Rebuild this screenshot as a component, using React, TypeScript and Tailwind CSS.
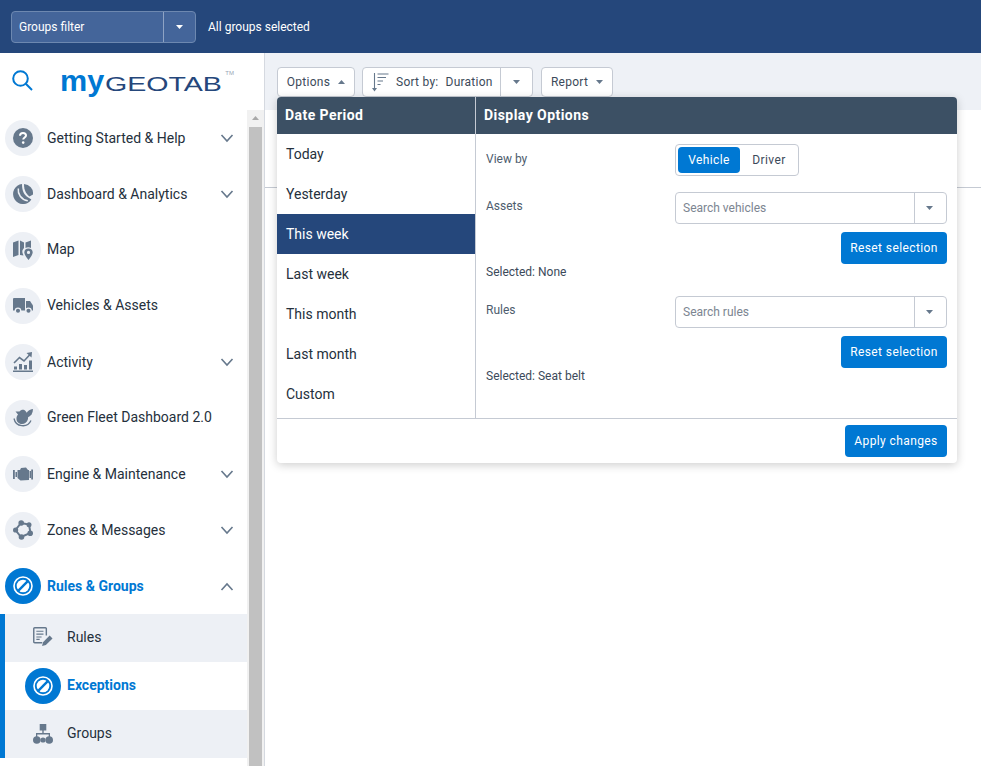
import React from "react";

const IC = "#66788c";

function Chevron({ up = false }: { up?: boolean }) {
  return (
    <svg width="14" height="9" viewBox="0 0 14 9" fill="none" stroke={IC} strokeWidth="1.6">
      <path d={up ? "M1.5 8 L7 2 L12.5 8" : "M1.5 1 L7 7 L12.5 1"} />
    </svg>
  );
}

function Caret({ up = false, color = "#66788c" }: { up?: boolean; color?: string }) {
  return (
    <svg width="7" height="4" viewBox="0 0 7 4" fill={color}>
      <path d={up ? "M0 4 L3.5 0 L7 4Z" : "M0 0 L7 0 L3.5 4Z"} />
    </svg>
  );
}

function HelpIcon() {
  return (
    <svg width="20" height="20" viewBox="0 0 20 20">
      <circle cx="10" cy="10" r="10" fill={IC} />
      <path d="M7 7.8 C7 5.8 8.3 5 10 5 C11.8 5 13 6 13 7.5 C13 9.4 10.2 9.6 10.2 11.6" fill="none" stroke="#fff" strokeWidth="2" />
      <circle cx="10.2" cy="14.6" r="1.3" fill="#fff" />
    </svg>
  );
}

function DashIcon() {
  return (
    <svg width="20" height="20" viewBox="0 0 20 20" fill={IC}>
      <path d="M11 0 A9.5 9.5 0 0 1 20 10.5 L16.5 12.5 C13 10 11 6 11 0Z" />
      <path d="M9 0.1 A10 10 0 1 0 18.4 15.6 L14.8 13.2 C11 11 9 6.5 9 0.1Z" />
      <path d="M5.3 4.5 C4.6 10 8 15.5 14.8 16.8" fill="none" stroke="#edf0f5" strokeWidth="1.5" />
    </svg>
  );
}

function MapIcon() {
  return (
    <svg width="20" height="20" viewBox="0 0 20 20" fill={IC}>
      <path d="M0 2.5 L5.5 0.5 L5.5 15 L0 17Z" />
      <path d="M7 0.5 L11 2.5 L11 8 C9.5 9.5 9 11 9.5 13 L10.5 15.5 L7 15Z" />
      <path d="M12.5 2.5 L18 0.5 L18 8 C16.5 7 14 7 12.5 8Z" />
      <path fillRule="evenodd" d="M15.5 8.5 C18 8.5 19.7 10.2 19.7 12.3 C19.7 14.5 17.5 17.5 15.5 20 C13.5 17.5 11.3 14.5 11.3 12.3 C11.3 10.2 13 8.5 15.5 8.5Z M15.5 10.8 A1.6 1.6 0 1 0 15.5 14 A1.6 1.6 0 1 0 15.5 10.8Z" />
    </svg>
  );
}

function TruckIcon() {
  return (
    <svg width="20" height="16" viewBox="0 0 20 16" fill={IC}>
      <path d="M0 1 A1 1 0 0 1 1 0 L12 0 L12 12.5 L0 12.5Z" />
      <path d="M13 3 L17 3 L20 7.5 L20 12.5 L13 12.5Z" />
      <circle cx="5" cy="12.8" r="2.7" stroke="#edf0f5" strokeWidth="1.3" />
      <circle cx="15.5" cy="12.8" r="2.7" stroke="#edf0f5" strokeWidth="1.3" />
    </svg>
  );
}

function ActivityIcon() {
  return (
    <svg width="20" height="20" viewBox="0 0 20 20" fill={IC}>
      <rect x="0" y="18.5" width="20" height="1.5" />
      <rect x="1" y="14.5" width="3" height="3" />
      <rect x="6" y="12" width="3" height="5.5" />
      <rect x="11" y="13" width="3" height="4.5" />
      <rect x="16" y="8.5" width="3" height="9" />
      <path d="M1 11 L6.5 5.5 L11 9 L17 2.5" fill="none" stroke={IC} strokeWidth="1.6" />
      <path d="M13.5 1 L19 0 L18.5 5.5Z" />
    </svg>
  );
}

function GreenIcon() {
  return (
    <svg width="20" height="20" viewBox="0 0 20 20" fill={IC}>
      <path d="M2.5 3.5 L6.5 3.5 C8 1.5 11 1 12.5 3 C14.5 5 15.5 8 15 11 C14.2 14.5 11.5 16 9 16 C5.5 16 3.2 13.5 3.5 10 C3.6 8.5 4.3 7.3 5 6.5Z" />
      <path d="M13 7.5 C13.5 3.5 16 1.5 20 1 C20 5 18 8 15 9.3Z" />
      <path d="M1 10.5 A9 9 0 0 0 18 12.5" fill="none" stroke={IC} strokeWidth="1.3" />
    </svg>
  );
}

function EngineIcon() {
  return (
    <svg width="20" height="14" viewBox="0 0 20 14" fill={IC}>
      <rect x="0" y="3" width="1.8" height="9" />
      <rect x="2.5" y="5" width="1.5" height="5" />
      <path d="M4.5 3 L7 3 L8 1 L13 0.5 L15 3 L16 3 L16 13 L7.5 13.5 L4.5 11Z" />
      <rect x="16.5" y="4" width="1.5" height="7" />
      <rect x="18.2" y="2.5" width="1.8" height="10" />
    </svg>
  );
}

function ZonesIcon() {
  return (
    <svg width="20" height="20" viewBox="0 0 20 20" fill={IC}>
      <path d="M8 3 L16 4.5 L17.5 13 L8 17 L2.5 10Z" fill="none" stroke={IC} strokeWidth="2" />
      <circle cx="8.2" cy="3" r="2.8" />
      <circle cx="16" cy="4.8" r="2.5" />
      <circle cx="17.2" cy="13.2" r="2.8" />
      <circle cx="8.5" cy="17" r="2.8" />
      <circle cx="2.6" cy="10" r="2.6" />
    </svg>
  );
}

function BanIcon() {
  return (
    <svg width="20" height="20" viewBox="0 0 20 20" fill="none" stroke="#fff">
      <circle cx="10" cy="10" r="9" strokeWidth="1.6" />
      <circle cx="10" cy="10" r="6.3" fill="#fff" stroke="none" />
      <path d="M5.2 14.8 L14.8 5.2" stroke="#0078d3" strokeWidth="2.4" />
    </svg>
  );
}

function RulesIcon() {
  return (
    <svg width="20" height="20" viewBox="0 0 21 21" fill="none" stroke={IC}>
      <path d="M9.5 16.5 L1.8 16.5 A1 1 0 0 1 0.8 15.5 L0.8 1.8 A1 1 0 0 1 1.8 0.8 L13 0.8 A1 1 0 0 1 14 1.8 L14 9" strokeWidth="1.5" />
      <path d="M3.5 4.5 H11 M3.5 7.5 H11 M3.5 10.5 H9 M3.5 13 H7" strokeWidth="1.2" />
      <path d="M9.5 20 L10.5 16 L17.5 9 L20.5 12 L13.5 19Z" fill={IC} stroke="none" />
    </svg>
  );
}

function GroupsIcon() {
  return (
    <svg width="20" height="20" viewBox="0 0 20 20" fill={IC}>
      <path d="M6.7 0 H13.3 V6.5 H6.7Z" />
      <path d="M9.3 6 H10.7 V9 H17 V13 H15.7 V10.4 H4.3 V13 H3 V9 H9.3Z" />
      <circle cx="3.8" cy="16" r="3.8" />
      <circle cx="16.2" cy="16" r="3.8" />
      <circle cx="10" cy="16" r="2.6" />
    </svg>
  );
}

function SortIcon() {
  return (
    <svg width="17" height="19" viewBox="0 0 17 19" fill="none" stroke={IC} strokeWidth="1.1">
      <path d="M2.5 0 V17" />
      <path d="M0 15 H5 L2.5 18.5Z" fill={IC} stroke="none" />
      <path d="M5.5 1 H16.5 M5.5 4.5 H14 M5.5 8 H11 M5.5 11.5 H8.5" />
    </svg>
  );
}

type Item = { label: string; icon: React.ReactNode; chevron: boolean };

const items: Item[] = [
  { label: "Getting Started & Help", icon: <HelpIcon />, chevron: true },
  { label: "Dashboard & Analytics", icon: <DashIcon />, chevron: true },
  { label: "Map", icon: <MapIcon />, chevron: false },
  { label: "Vehicles & Assets", icon: <TruckIcon />, chevron: false },
  { label: "Activity", icon: <ActivityIcon />, chevron: true },
  { label: "Green Fleet Dashboard 2.0", icon: <GreenIcon />, chevron: false },
  { label: "Engine & Maintenance", icon: <EngineIcon />, chevron: true },
  { label: "Zones & Messages", icon: <ZonesIcon />, chevron: true },
];

function NavRow({ item }: { item: Item }) {
  return (
    <div className="h-14 flex items-center pl-[5px] pr-[13px]">
      <div className="w-9 h-9 rounded-full bg-[#edf0f5] flex items-center justify-center shrink-0">{item.icon}</div>
      <span className={`ml-1.5 flex-1 text-sm text-[#25303c] ${item.chevron ? "" : "pb-[2px]"}`}>{item.label}</span>
      {item.chevron && <Chevron />}
    </div>
  );
}

function SearchBox({ placeholder }: { placeholder: string }) {
  return (
    <div className="h-8 w-[272px] rounded border border-[#c5cad3] flex items-center bg-white">
      <span className="flex-1 pl-[7px] text-xs text-[#7c8591]">{placeholder}</span>
      <div className="w-8 h-full border-l border-[#c5cad3] flex items-center justify-center pr-[2px]">
        <Caret />
      </div>
    </div>
  );
}

function PrimaryButton({ children, w }: { children: React.ReactNode; w: string }) {
  return (
    <button className={`h-8 ${w} rounded bg-[#0078d3] text-white text-xs tracking-[0.4px] flex items-center justify-center`}>
      {children}
    </button>
  );
}

const dates = ["Today", "Yesterday", "This week", "Last week", "This month", "Last month", "Custom"];

export default function App() {
  return (
    <div className="w-[981px] h-[766px] overflow-hidden flex flex-col bg-white font-['Roboto',sans-serif]">
      <header className="h-[53px] bg-[#25477b] flex items-start pt-[11px] pl-[11px] shrink-0">
        <div className="w-[185px] h-8 rounded border border-[#6d88b0] bg-[#44659a] flex items-center">
          <span className="flex-1 pl-[7px] text-xs text-white">Groups filter</span>
          <div className="w-8 h-full border-l border-[#8ea3c4] flex items-center justify-center">
            <Caret color="#ffffff" />
          </div>
        </div>
        <span className="ml-3 h-8 flex items-center text-xs text-white">All groups selected</span>
      </header>

      <div className="flex-1 flex min-h-0">
        <aside className="w-[265px] shrink-0 flex flex-col border-r border-[#d5d9e0]">
          <div className="h-[57px] shrink-0 flex items-center pl-3 pb-[2px]">
            <svg width="21" height="21" viewBox="0 0 21 21" fill="none" stroke="#0078d3" strokeWidth="2" className="shrink-0">
              <circle cx="8.5" cy="8.5" r="7.3" />
              <path d="M13.8 13.8 L20 20" />
            </svg>
            <div className="ml-[27px] flex items-baseline w-[174px] mt-[3px] font-['Liberation_Sans',sans-serif]">
              <span className="w-[45px] font-bold text-[30px] leading-[26px] text-[#0078d3] origin-left scale-x-[1.02]">my</span>
              <span className="w-[120px] text-[21px] leading-[26px] text-[#25477b] origin-left scale-x-[1.36]">GEOTAB</span>
              <span className="self-start mt-[2px] ml-[1px] text-[6px] leading-[6px] text-[#9aa5b5]">TM</span>
            </div>
          </div>
          <div className="flex-1 flex min-h-0">
            <nav className="w-[247px] overflow-hidden">
              {items.map((it) => (
                <NavRow key={it.label} item={it} />
              ))}
              <div className="h-14 flex items-center pl-[5px] pr-[13px]">
                <div className="w-9 h-9 rounded-full bg-[#0078d3] flex items-center justify-center shrink-0">
                  <BanIcon />
                </div>
                <span className="ml-1.5 flex-1 text-sm font-bold text-[#0078d3]">Rules &amp; Groups</span>
                <Chevron up />
              </div>
              <div className="border-l-[5px] border-[#0078d3]">
                <div className="h-12 bg-[#edf0f5] flex items-center pb-[2px]">
                  <div className="w-[62px] pl-7 shrink-0"><RulesIcon /></div>
                  <span className="text-sm text-[#25303c]">Rules</span>
                </div>
                <div className="h-12 bg-white flex items-center">
                  <div className="ml-5 w-9 h-9 rounded-full bg-[#0078d3] flex items-center justify-center shrink-0">
                    <BanIcon />
                  </div>
                  <span className="ml-1.5 pb-[2px] text-sm font-bold text-[#0078d3]">Exceptions</span>
                </div>
                <div className="h-12 bg-[#edf0f5] flex items-center pb-[2px]">
                  <div className="w-[62px] pl-7 shrink-0 pt-[2px]"><GroupsIcon /></div>
                  <span className="text-sm text-[#25303c]">Groups</span>
                </div>
              </div>
            </nav>
            <div className="w-[17px] bg-[#f1f1f1] flex flex-col items-center pt-[6px]">
              <Caret up color="#a8a8a8" />
              <div className="w-[13px] flex-1 bg-[#c1c1c1] mt-[7px]" />
            </div>
          </div>
        </aside>

        <main className="flex-1 relative min-w-0">
          <div className="h-[57px] bg-[#eef1f6] flex items-start gap-[7px] pl-3 pt-[14px]">
            <button className="w-[78px] h-[30px] rounded border border-[#c5cad3] bg-white flex items-center justify-center gap-2 text-xs text-[#3c4a5a] tracking-[0.25px]">
              Options <Caret up />
            </button>
            <div className="w-[171px] h-[30px] rounded border border-[#c5cad3] bg-white flex items-center text-xs text-[#3c4a5a] tracking-[0.25px]">
              <div className="flex-1 flex items-center pl-[9px]">
                <SortIcon />
                <span className="ml-[7px]">Sort by:</span>
                <span className="ml-[7px]">Duration</span>
              </div>
              <div className="w-8 h-full border-l border-[#c5cad3] flex items-center justify-center pr-px">
                <Caret />
              </div>
            </div>
            <button className="ml-px w-[72px] h-[30px] rounded border border-[#c5cad3] bg-white flex items-center justify-center gap-2 text-xs text-[#3c4a5a] tracking-[0.25px]">
              Report <Caret />
            </button>
          </div>
          <div className="h-[78px] border-b border-[#c5cad3]" />

          <div className="absolute left-3 top-[44px] w-[680px] h-[366px] rounded bg-white shadow-[0_2px_10px_rgba(0,0,0,0.2)] flex flex-col overflow-hidden">
            <div className="flex-1 flex min-h-0">
              <div className="w-[199px] border-r border-[#c5cad3] flex flex-col">
                <div className="h-[37px] bg-[#3c5064] text-white text-sm font-bold tracking-[0.45px] flex items-center pl-2 pb-[2px]">Date Period</div>
                {dates.map((d) => (
                  <div
                    key={d}
                    className={`h-10 flex items-center pl-[9px] text-sm ${d === "This week" ? "bg-[#25477b] text-white" : "text-[#25303c]"}`}
                  >
                    {d}
                  </div>
                ))}
              </div>
              <div className="flex-1 flex flex-col">
                <div className="h-[37px] bg-[#3c5064] text-white text-sm font-bold tracking-[0.45px] flex items-center pl-2 pb-[2px]">Display Options</div>
                <div className="pt-[10px] pl-[10px] pr-[10px] text-xs text-[#4d5c6d] flex flex-col">
                  <div className="flex items-start">
                    <span className="w-[189px] pt-[7px]">View by</span>
                    <div className="w-[124px] h-8 rounded border border-[#c5cad3] flex items-center p-[2px]">
                      <div className="w-[62px] h-[26px] rounded bg-[#0078d3] text-white tracking-[0.4px] flex items-center justify-center">Vehicle</div>
                      <div className="flex-1 text-center pl-[2px] text-[#3c4a5a] tracking-[0.4px]">Driver</div>
                    </div>
                  </div>
                  <div className="flex items-start mt-4">
                    <span className="w-[189px] pt-[6px]">Assets</span>
                    <SearchBox placeholder="Search vehicles" />
                  </div>
                  <div className="flex justify-end mt-2"><PrimaryButton w="w-[106px]">Reset selection</PrimaryButton></div>
                  <div className="h-4 flex items-center text-[#3c4a5a]">Selected: None</div>
                  <div className="flex items-start mt-4">
                    <span className="w-[189px] pt-[6px]">Rules</span>
                    <SearchBox placeholder="Search rules" />
                  </div>
                  <div className="flex justify-end mt-2"><PrimaryButton w="w-[106px]">Reset selection</PrimaryButton></div>
                  <div className="h-4 flex items-center text-[#3c4a5a]">Selected: Seat belt</div>
                </div>
              </div>
            </div>
            <div className="h-[45px] border-t border-[#c5cad3] flex items-start justify-end pt-[6px] pr-[10px]">
              <PrimaryButton w="w-[102px]">Apply changes</PrimaryButton>
            </div>
          </div>
        </main>
      </div>
    </div>
  );
}
